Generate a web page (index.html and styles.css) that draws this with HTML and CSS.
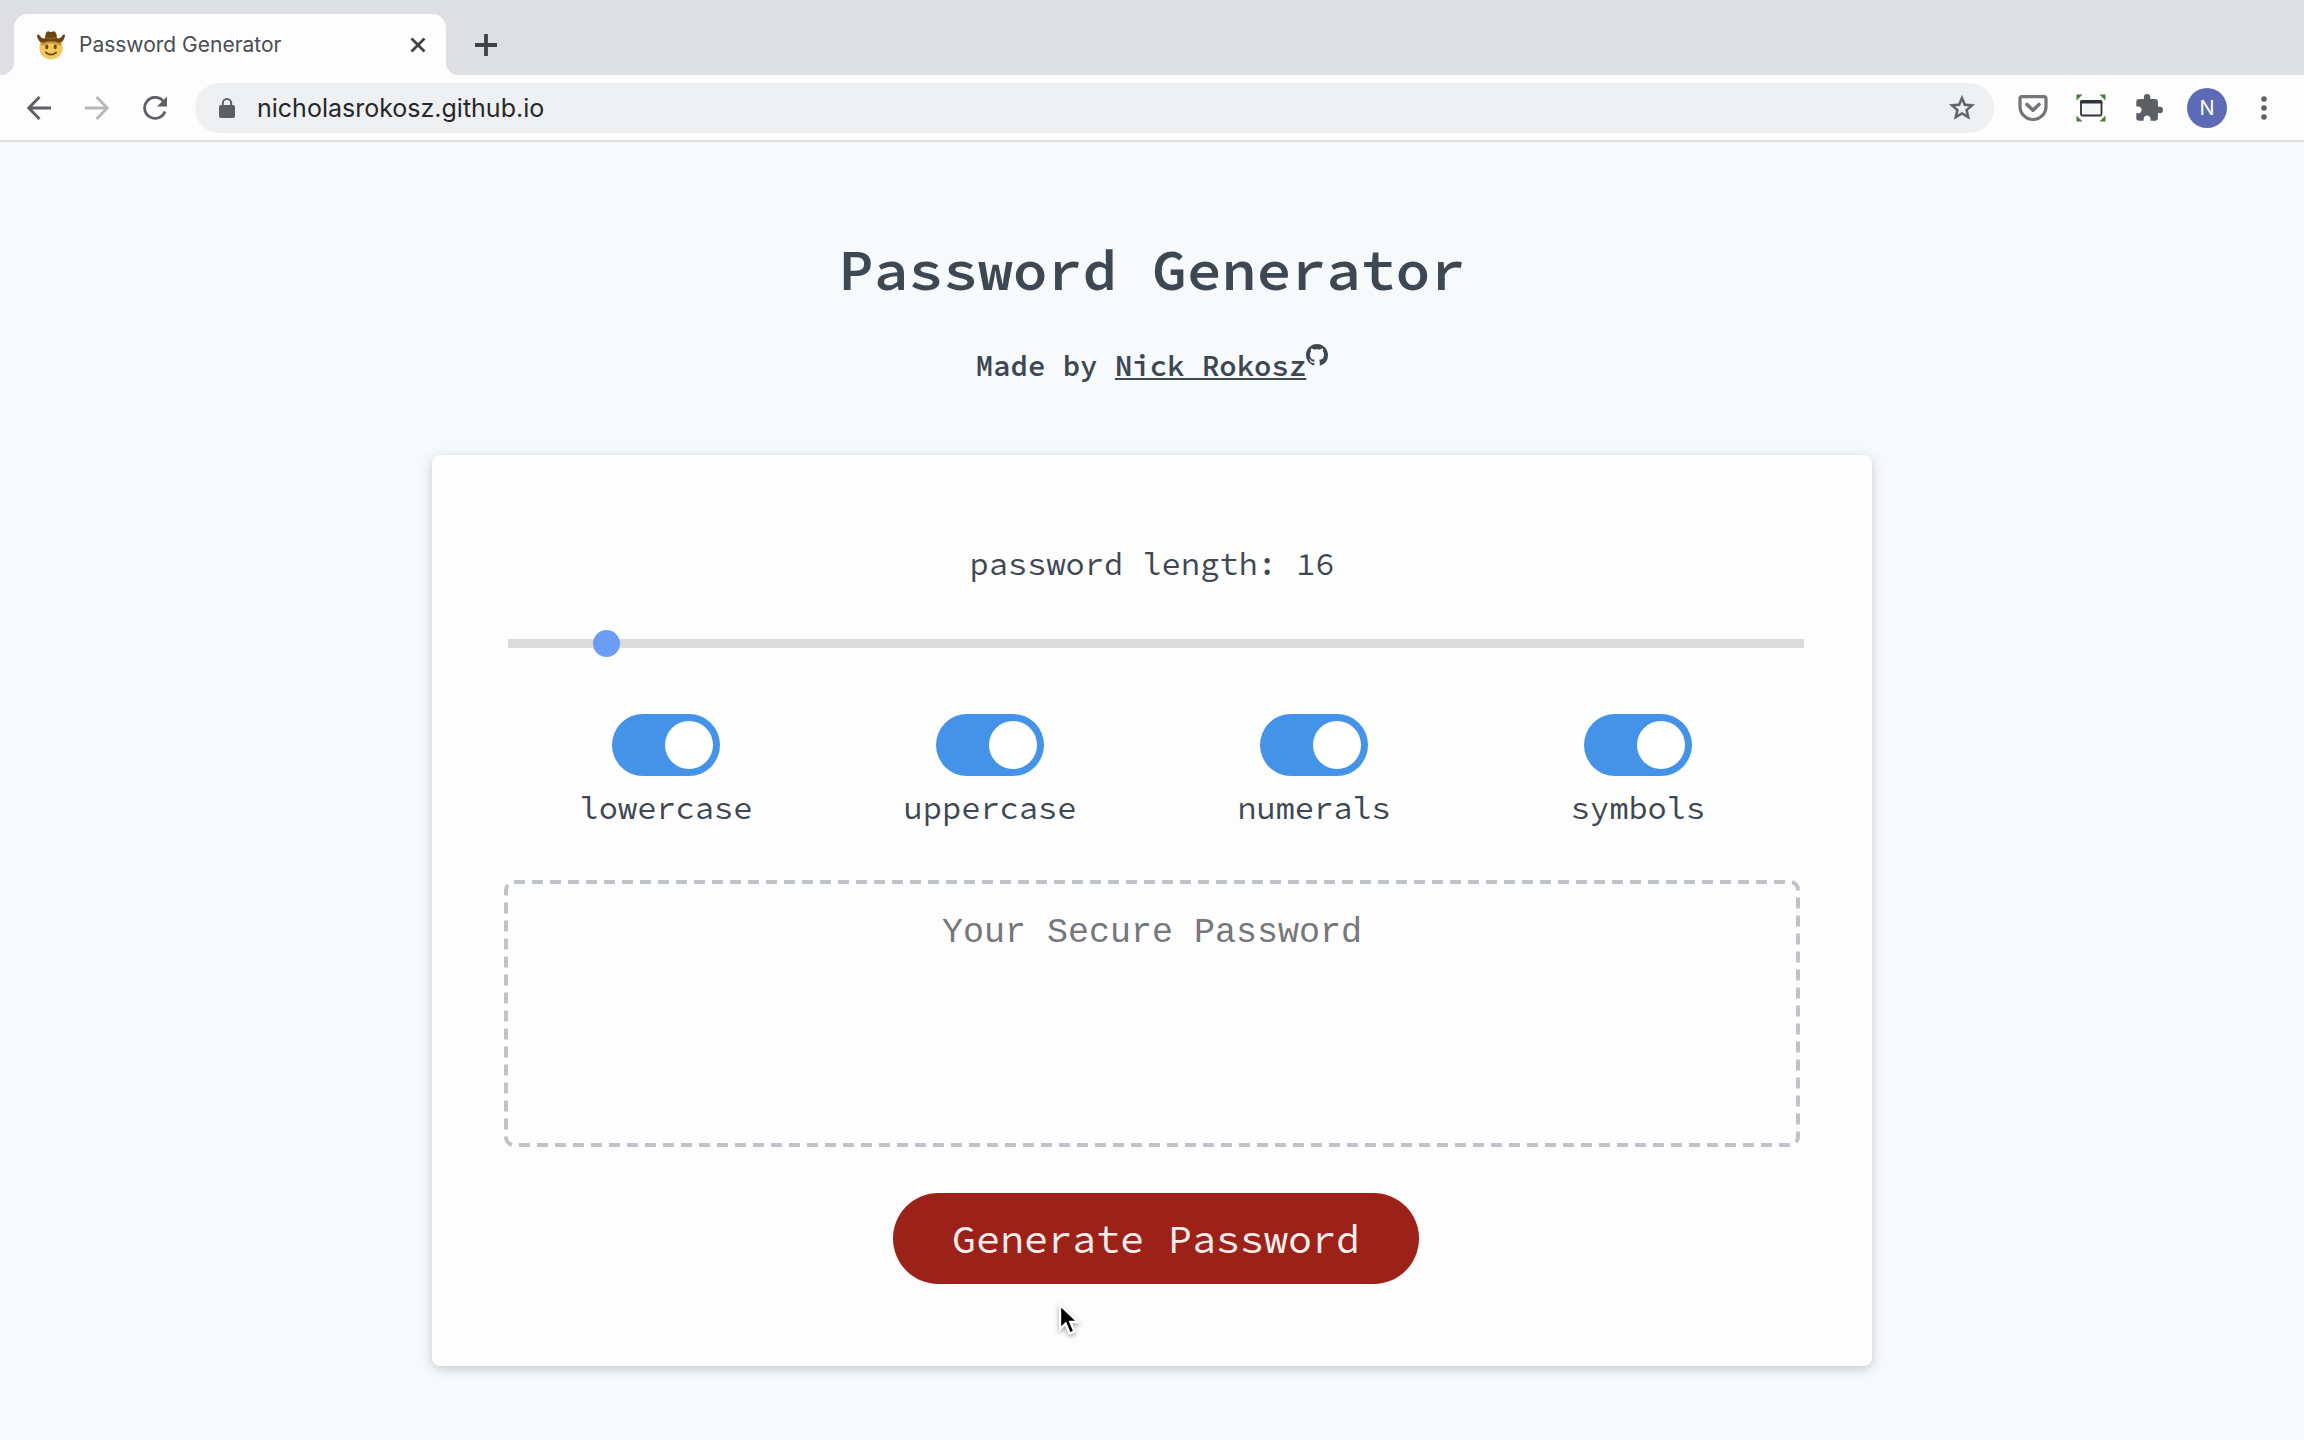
FILE: index.html
```html
<!DOCTYPE html>
<html lang="en">
<head>
<meta charset="utf-8">
<title>Password Generator</title>
<link rel="stylesheet" href="styles.css">
</head>
<body>
<header class="browser">
  <div class="tabstrip">
    <div class="tab">
      <svg class="favicon" viewBox="0 0 32 32" aria-hidden="true">
        <circle cx="16" cy="19" r="12.500" fill="#f3c95f"/>
        <path d="M4.500 13Q16 8 27.500 13L26 17Q16 12 6 17Z" fill="#c99437"/>
        <ellipse cx="11.500" cy="18" rx="1.700" ry="2.600" fill="#6b4a12"/>
        <ellipse cx="20.500" cy="18" rx="1.700" ry="2.600" fill="#6b4a12"/>
        <path d="M10.500 24Q16 28.500 21.500 24" fill="none" stroke="#6b4a12" stroke-width="1.800" stroke-linecap="round"/>
        <path d="M1 5.500Q2.500 4 4 6Q6 9.500 9.500 9Q10 1.500 13 1.200Q16 2.800 19 1.200Q22 1.500 22.500 9Q26 9.500 28 6Q29.500 4 31 5.500Q30 13 24.500 13.500Q16 10.500 7.500 13.500Q2 13 1 5.500Z" fill="#6a4411"/>
        <path d="M10 8.200Q16 10.500 22 8.200" fill="none" stroke="#8f6322" stroke-width="1.500"/>
      </svg>
      <span class="tab-title">Password Generator</span>
      <button class="icon-button" type="button" aria-label="Close tab">
        <svg class="icon-small" viewBox="0 0 16 16"><path d="M1.500 1.500L14.500 14.500M14.500 1.500L1.500 14.500" stroke="#3f4246" stroke-width="2.800"/></svg>
      </button>
    </div>
    <button class="icon-button" type="button" aria-label="New tab">
      <svg class="icon" viewBox="0 0 24 24"><path d="M12 1V23M1 12H23" stroke="#3f4246" stroke-width="3.800"/></svg>
    </button>
  </div>
  <div class="toolbar">
    <nav class="nav">
      <button class="icon-button" type="button" aria-label="Back">
        <svg class="icon" viewBox="0 0 24 24"><path d="M24 12H2M12.500 1L1.800 12L12.500 23" fill="none" stroke="#5c5f63" stroke-width="2.800"/></svg>
      </button>
      <button class="icon-button" type="button" aria-label="Forward" disabled>
        <svg class="icon" viewBox="0 0 24 24"><path d="M0 12H22M11.500 1L22.200 12L11.500 23" fill="none" stroke="#b6b8ba" stroke-width="2.800"/></svg>
      </button>
      <button class="icon-button" type="button" aria-label="Reload">
        <svg class="icon" viewBox="0 0 24 24"><path d="M20.500 5.500A10.500 10.500 0 1 0 22 15.500" fill="none" stroke="#5c5f63" stroke-width="2.800"/><path d="M24 .5V10.500H14Z" fill="#5c5f63"/></svg>
      </button>
    </nav>
    <div class="omnibox">
      <svg class="lock" viewBox="0 0 16 20" aria-hidden="true"><rect y="7" width="16" height="13" rx="2" fill="#5c5f63"/><path d="M3.800 8V5.200A4.200 4.200 0 0 1 12.200 5.200V8" fill="none" stroke="#5c5f63" stroke-width="2"/></svg>
      <input class="url" type="text" aria-label="Address" value="nicholasrokosz.github.io">
      <button class="icon-button" type="button" aria-label="Bookmark">
        <svg class="star" viewBox="0 0 24 24"><path d="M22 9.240l-7.190-.62L12 2 9.190 8.630 2 9.240l5.460 4.730L5.820 21 12 17.270 18.180 21l-1.630-7.030L22 9.240zM12 15.400l-3.760 2.270 1-4.280-3.320-2.880 4.380-.38L12 6.100l1.710 4.040 4.380.38-3.320 2.880 1 4.280L12 15.400z" fill="#5c5f63" stroke="#5c5f63" stroke-width=".4"/></svg>
      </button>
    </div>
    <div class="extensions">
      <button class="icon-button" type="button" aria-label="Pocket">
        <svg class="ext-icon" viewBox="0 0 30 28"><path d="M4 2.600H26Q28 2.600 28 4.600V12.500A13 13 0 0 1 2 12.500V4.600Q2 2.600 4 2.600Z" fill="none" stroke="#727477" stroke-width="3.200"/><path d="M9 10.500L15 16.200L21 10.500" fill="none" stroke="#727477" stroke-width="3.600" stroke-linecap="round" stroke-linejoin="round"/></svg>
      </button>
      <button class="icon-button" type="button" aria-label="Capture window">
        <svg class="ext-icon" viewBox="0 0 30 28"><path d="M.5.500H6.500L.5 6.500ZM29.500.500V6.500L23.500.500ZM.5 27.500V21.500L6.500 27.500ZM29.500 27.500H23.500L29.500 21.500Z" fill="#4c7a3c"/><rect x="5" y="7" width="20.500" height="14.500" rx="1.500" fill="#f5f6f7" stroke="#303438" stroke-width="1.800"/><path d="M4.200 9.500V7.600Q4.200 6 5.800 6H24.700Q26.300 6 26.300 7.600V9.500Z" fill="#303438"/></svg>
      </button>
      <button class="icon-button" type="button" aria-label="Extensions">
        <svg class="ext-icon" viewBox="1 1 22 22"><path d="M20.500 11H19V7c0-1.100-.9-2-2-2h-4V3.500a2.500 2.500 0 0 0-5 0V5H4c-1.100 0-1.990.9-1.990 2v3.800H3.500c1.490 0 2.700 1.210 2.700 2.700s-1.210 2.700-2.700 2.700H2V20c0 1.100.9 2 2 2h3.800v-1.500c0-1.490 1.210-2.700 2.700-2.700s2.700 1.210 2.700 2.700V22H17c1.100 0 2-.9 2-2v-4h1.500a2.500 2.500 0 0 0 0-5z" fill="#5c5f63"/></svg>
      </button>
    </div>
    <button class="avatar" type="button" aria-label="Profile">N</button>
    <button class="icon-button" type="button" aria-label="Menu">
      <svg class="menu-icon" viewBox="0 0 6 24"><g fill="#5c5f63"><circle cx="3" cy="3" r="2.800"/><circle cx="3" cy="12" r="2.800"/><circle cx="3" cy="21" r="2.800"/></g></svg>
    </button>
  </div>
</header>
<main class="page">
  <h1 class="title">Password Generator</h1>
  <h2 class="byline">Made by <a class="author" href="#">Nick Rokosz</a><svg class="github" viewBox="0 0 16 16" aria-label="GitHub"><path d="M8 0C3.580 0 0 3.580 0 8c0 3.540 2.290 6.530 5.470 7.590.4.070.55-.17.55-.38 0-.19-.01-.82-.01-1.490-2.010.37-2.530-.49-2.690-.94-.09-.23-.48-.94-.82-1.130-.28-.15-.68-.52-.01-.53.63-.01 1.080.58 1.230.82.72 1.210 1.870.87 2.330.66.070-.52.28-.87.51-1.070-1.780-.2-3.640-.89-3.640-3.950 0-.87.31-1.590.82-2.150-.08-.2-.36-1.020.08-2.120 0 0 .67-.21 2.200.82.640-.18 1.320-.27 2-.27s1.360.09 2 .27c1.530-1.040 2.200-.82 2.200-.82.44 1.100.16 1.920.08 2.120.51.56.82 1.270.82 2.150 0 3.070-1.870 3.750-3.650 3.950.29.25.54.73.54 1.480 0 1.070-.01 1.930-.01 2.200 0 .21.15.46.55.38A8.010 8.010 0 0 0 16 8c0-4.420-3.580-8-8-8z" fill="#3e4852"/></svg></h2>
  <form class="card">
    <label class="length-label" for="length">password length: 16</label>
    <input class="slider" id="length" type="range" min="8" max="128" value="16">
    <div class="options">
      <label class="option"><input class="switch" type="checkbox" checked>lowercase</label>
      <label class="option"><input class="switch" type="checkbox" checked>uppercase</label>
      <label class="option"><input class="switch" type="checkbox" checked>numerals</label>
      <label class="option"><input class="switch" type="checkbox" checked>symbols</label>
    </div>
    <div class="result-box">
      <svg class="dashes" aria-hidden="true"><rect class="dash-line" x="2" y="2" rx="8"/></svg>
      <textarea class="result" aria-label="Generated password" placeholder="Your Secure Password" readonly></textarea>
    </div>
    <button class="generate" type="button">Generate Password</button>
  </form>
</main>
<svg class="pointer" viewBox="0 0 24 34" aria-hidden="true"><path d="M2 2V26L7.600 20.600L11.600 30.500L16.400 28.500L12.400 19H20Z" fill="#000" stroke="#fff" stroke-width="2.400"/></svg>
</body>
</html>
```
FILE: styles.css
```css
* { box-sizing: border-box; }

body {
  margin: 0;
  min-height: 100vh;
  background: #f6fafd;
  color: #3e4852;
  font-family: "Source Code Pro", "Noto Sans Mono CJK JP", "DejaVu Sans Mono", monospace;
}

button, input, textarea { font: inherit; }
svg { display: block; }

/* Browser frame */
.browser {
  font-family: Inter, "Open Sans", sans-serif;
  background: #fdfdfe;
  border-bottom: 2px solid #dcdddf;
}
.tabstrip {
  display: flex;
  align-items: center;
  gap: 28px;
  height: 75px;
  padding: 14px 14px 0;
  background: #dddfe3;
}
.tab {
  position: relative;
  display: flex;
  align-items: center;
  width: 432px;
  height: 61px;
  padding: 0 20px 0 22px;
  border-radius: 14px 14px 0 0;
  background: #fdfdfe;
}
.tab::before, .tab::after {
  content: "";
  position: absolute;
  bottom: 0;
  width: 14px;
  height: 14px;
}
.tab::before {
  right: 100%;
  background: radial-gradient(circle at 0 0, #dddfe3 14px, #fdfdfe 15px);
}
.tab::after {
  left: 100%;
  background: radial-gradient(circle at 100% 0, #dddfe3 14px, #fdfdfe 15px);
}
.favicon { width: 30px; height: 30px; }
.tab-title {
  flex: 1;
  margin-left: 13px;
  font-size: 21px;
  line-height: 28px;
  color: #4a4d51;
}
.icon-button {
  display: block;
  padding: 0;
  border: 0;
  background: none;
}
.icon { width: 24px; height: 24px; }
.icon-small { width: 16px; height: 16px; }

.toolbar {
  display: flex;
  align-items: center;
  height: 65px;
  padding: 0 37px 0 27px;
}
.nav { display: flex; gap: 34px; }
.omnibox {
  display: flex;
  align-items: center;
  flex: 1;
  height: 50px;
  margin: 0 24px 0 28px;
  padding: 0 17px 0 24px;
  border-radius: 25px;
  background: #eff0f2;
}
.lock { width: 16px; height: 20px; }
.url {
  flex: 1;
  margin-left: 22px;
  padding: 0;
  border: 0;
  background: none;
  font-size: 25px;
  line-height: 32px;
  color: #25272a;
}
.star { width: 30px; height: 30px; }
.extensions { display: flex; align-items: center; gap: 28px; }
.ext-icon { width: 30px; height: 28px; }
.avatar {
  width: 40px;
  height: 40px;
  margin: 0 34px 0 23px;
  padding: 0;
  border: 0;
  border-radius: 50%;
  background: #5c6bb5;
  color: #fff;
  font-size: 20px;
}
.menu-icon { width: 6px; height: 24px; }

/* Page */
.page {
  display: flex;
  flex-direction: column;
  align-items: center;
}
.title {
  margin: 88px 0 0;
  font-size: 58px;
  line-height: 80px;
  font-weight: 600;
}
.byline {
  display: flex;
  margin: 34px 0 0;
  font-size: 29px;
  line-height: 44px;
  font-weight: 600;
  white-space: pre;
}
.author {
  color: inherit;
  text-decoration: underline;
}
.github { width: 22px; height: 22px; }

.card {
  display: flex;
  flex-direction: column;
  align-items: center;
  width: 62.5%;
  margin: 67px 0 72px;
  padding: 85px 72px 82px;
  border-radius: 8px;
  background: #fdfdfe;
  box-shadow: 0 3px 12px rgba(0, 0, 0, .2);
}
.length-label { font-size: 32px; line-height: 48px; }
.slider {
  appearance: none;
  width: 100%;
  height: 9px;
  margin: 51px -4px 0 4px;
  background: #dcdcdc;
}
.slider::-webkit-slider-thumb {
  appearance: none;
  width: 27px;
  height: 27px;
  border: 0;
  border-radius: 50%;
  background: #6c9df5;
}
.options {
  display: grid;
  grid-template-columns: repeat(4, 1fr);
  width: 100%;
  margin-top: 66px;
}
.option {
  display: flex;
  flex-direction: column;
  align-items: center;
  gap: 8px;
  font-size: 32px;
  line-height: 48px;
}
.switch {
  appearance: none;
  display: flex;
  justify-content: flex-end;
  width: 108px;
  height: 62px;
  margin: 0;
  padding: 7px;
  border-radius: 31px;
  background: #4593e8;
}
.switch::before {
  content: "";
  width: 48px;
  height: 48px;
  border-radius: 50%;
  background: #fff;
}
.switch:not(:checked) { justify-content: flex-start; background: #bdc3c8; }
.result-box {
  position: relative;
  width: 100%;
  margin-top: 48px;
}
.dashes {
  position: absolute;
  inset: 0;
  width: 100%;
  height: 100%;
  pointer-events: none;
}
.dash-line {
  width: calc(100% - 4px);
  height: calc(100% - 4px);
  fill: none;
  stroke: #bec4c9;
  stroke-width: 4px;
  stroke-dasharray: 11 7;
}
.result {
  display: block;
  width: 100%;
  height: 267px;
  padding: 33px 31px;
  border: 0;
  background: none;
  color: #3e4852;
  font-family: "Courier", "Liberation Mono", monospace;
  font-size: 35px;
  line-height: 40px;
  text-align: center;
  resize: none;
}
.result::placeholder { color: #75777a; opacity: 1; }
.generate {
  height: 91px;
  margin: 46px -4px 0 4px;
  padding: 0 59px;
  border: 0;
  border-radius: 46px;
  background: #9c2219;
  color: #fbeeee;
  font-size: 40px;
  line-height: 56px;
}

.pointer {
  position: absolute;
  left: 1058px;
  top: 1303px;
  width: 24px;
  height: 34px;
  filter: drop-shadow(0 2px 2px rgba(0, 0, 0, .35));
}
```
